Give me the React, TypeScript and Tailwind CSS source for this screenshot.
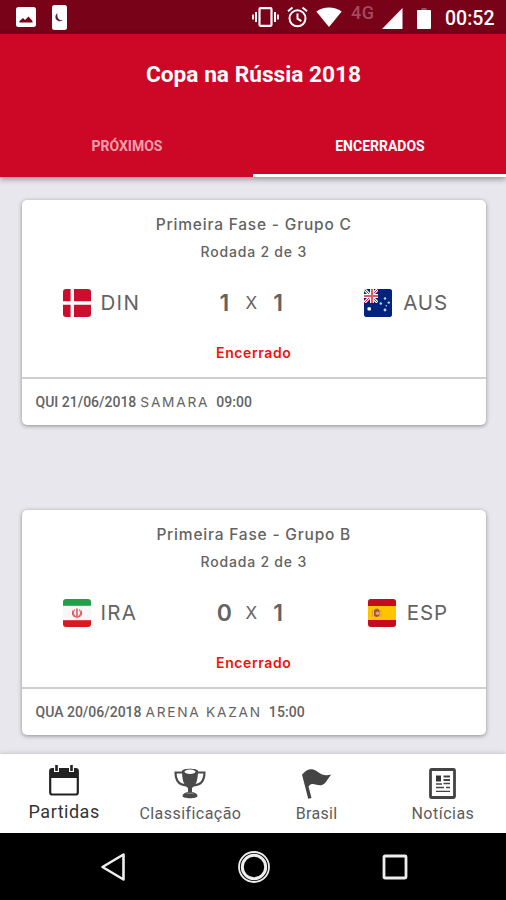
import React from "react";

interface Match {
  group: string;
  round: string;
  home: string;
  away: string;
  homeScore: number;
  awayScore: number;
  date: string;
  place: string;
  time: string;
  homeFlag: React.ReactNode;
  awayFlag: React.ReactNode;
}

const DenmarkFlag = () => (
  <svg className="w-7 h-7 rounded-[3px]" viewBox="0 0 28 28">
    <rect width="28" height="28" fill="#c8102e" />
    <path d="M9.3 0v28M0 14h28" stroke="#fff" strokeWidth="3.4" />
  </svg>
);

const AustraliaFlag = () => (
  <svg className="w-7 h-7 rounded-[3px]" viewBox="0 0 28 28">
    <rect width="28" height="28" fill="#00247d" />
    <path d="M0 0l14 14M14 0L0 14" stroke="#fff" strokeWidth="3" />
    <path d="M0 0l14 14M14 0L0 14" stroke="#d8223a" strokeWidth="1" />
    <path d="M0 7h14M8 0v14" stroke="#fff" strokeWidth="4" />
    <path d="M0 7h14M8 0v14" stroke="#e0596a" strokeWidth="2.2" />
    <path d="M14 0v14H0v14h28V0z" fill="#00247d" />
    <rect x="3.5" y="18.2" width="3.4" height="3.4" rx=".8" fill="#fff" />
    <g fill="#c9d2ee">
      <circle cx="21" cy="9.5" r="1.2" />
      <circle cx="16.8" cy="14.5" r="1.2" />
      <circle cx="24.8" cy="13.6" r="1.2" />
      <circle cx="22.3" cy="16.8" r=".8" />
      <circle cx="21" cy="21" r="1.4" />
    </g>
  </svg>
);

const IranFlag = () => (
  <svg className="w-7 h-7 rounded-[3px]" viewBox="0 0 28 28">
    <rect width="28" height="28" fill="#f7f7f7" />
    <rect width="28" height="6.8" fill="#239f4a" />
    <rect y="21.2" width="28" height="6.8" fill="#d71a20" />
    <g fill="none" stroke="#e0545c" strokeWidth="1.1">
      <path d="M14 9.5v9.8" strokeWidth="1.6" />
      <path d="M11.7 10.5c-2 2.5-1.6 5.8 1.3 7.5M16.3 10.5c2 2.5 1.6 5.8-1.3 7.5" />
      <path d="M10 11.5c-1.5 2.5-.5 5.5 2.2 6.5M18 11.5c1.5 2.5.5 5.5-2.2 6.5" />
    </g>
  </svg>
);

const SpainFlag = () => (
  <svg className="w-7 h-7 rounded-[3px]" viewBox="0 0 28 28">
    <rect width="28" height="28" fill="#ffc400" />
    <rect width="28" height="7" fill="#c60b1e" />
    <rect y="21" width="28" height="7" fill="#c60b1e" />
    <path d="M4.5 11v7M13 11v7" stroke="#e0a030" strokeWidth="1" />
    <path d="M6 11.5c1-2.3 4.5-2.3 5.5 0v4.5c0 2.6-5.5 2.6-5.5 0z" fill="#a8542c" />
    <circle cx="9.5" cy="14.3" r="1.7" fill="#d9a6a0" />
  </svg>
);

const matches: Match[] = [
  {
    group: "Primeira Fase - Grupo C",
    round: "Rodada 2 de 3",
    home: "DIN",
    away: "AUS",
    homeScore: 1,
    awayScore: 1,
    date: "QUI 21/06/2018",
    place: "SAMARA",
    time: "09:00",
    homeFlag: <DenmarkFlag />,
    awayFlag: <AustraliaFlag />,
  },
  {
    group: "Primeira Fase - Grupo B",
    round: "Rodada 2 de 3",
    home: "IRA",
    away: "ESP",
    homeScore: 0,
    awayScore: 1,
    date: "QUA 20/06/2018",
    place: "ARENA KAZAN",
    time: "15:00",
    homeFlag: <IranFlag />,
    awayFlag: <SpainFlag />,
  },
];

const StatusBar = () => (
  <div className="h-[34px] bg-[#780218] flex items-center pl-4 pr-[11px] text-white">
    <svg className="w-5 h-5" viewBox="0 0 20 20">
      <rect width="20" height="20" rx="2.5" fill="#fff" />
      <path d="M3.5 15.5V14l3.5-3 2 2 3.5-3.5 4 4.5v1.5z" fill="#780218" />
    </svg>
    <svg className="w-[15px] h-[25px] ml-4" viewBox="0 0 15 25">
      <rect width="15" height="25" rx="2.5" fill="#fff" />
      <path d="M5.5 8.2c-3 1.8-2.7 5.8.3 7.6 1.8 1 3.7.6 4.9-.6-3.5.4-6.2-2.5-5.2-7z" fill="#5a2030" />
    </svg>
    <div className="flex-1" />
    {/* Vibrate */}
    <svg className="w-[27px] h-5" viewBox="0 0 27 20" fill="none" stroke="#fff">
      <rect x="7.5" y="1.2" width="12" height="17.6" rx="1" strokeWidth="2.2" />
      <path d="M4 5v10M23 5v10" strokeWidth="2" />
      <path d="M1 7.5v5M26 7.5v5" strokeWidth="1.8" />
    </svg>
    {/* Alarm */}
    <svg className="w-[21px] h-[22px] ml-2" viewBox="0 0 21 22" fill="none" stroke="#fff" strokeWidth="2">
      <circle cx="10.5" cy="12.3" r="8" />
      <path d="M1 5.3l4.5-3.8M20 5.3l-4.5-3.8M10.5 7.5v5.2l3.8 2.5" />
    </svg>
    <svg className="w-[26px] h-5 ml-2" viewBox="0 0 26 20">
      <path d="M.3 4.6C7.5-1 18.5-1 25.7 4.6L13 20z" fill="#fff" />
    </svg>
    <span className="ml-[9px] w-6 mb-[8px] text-[18px] leading-[18px] font-medium tracking-[0.5px] text-[#a5495b]">4G</span>
    <svg className="w-[21px] h-[21px] ml-[7px] mt-[3px]" viewBox="0 0 21 21">
      <path d="M20.5 0v21H0z" fill="#fff" />
    </svg>
    <svg className="w-[14px] h-[21px] ml-[14px] mt-[2px]" viewBox="0 0 14 21">
      <path d="M4.5 0h5v3h-5z" fill="#a5495b" />
      <rect y="2" width="14" height="19" rx="1" fill="#fff" />
    </svg>
    <span className="ml-[14px] w-[50px] mt-[3px] text-[19.5px] leading-5 font-medium">00:52</span>
  </div>
);

const Header = () => (
  <header className="relative z-10 h-[143px] bg-[#cd0827] text-white shadow-[0_2px_6px_rgba(0,0,0,0.4)] flex flex-col">
    <h1 className="h-20 pt-[3px] pl-px flex items-center justify-center text-[22.7px] font-bold">
      Copa na Rússia 2018
    </h1>
    <div className="flex-1 grid grid-cols-2 text-[14px] font-bold">
      <button className="pt-[22px] pl-px flex justify-center text-[#f0a0ac]">PRÓXIMOS</button>
      <button className="pt-[22px] pl-px flex justify-center border-b-[3px] border-white">ENCERRADOS</button>
    </div>
  </header>
);

const MatchCard = ({ match }: { match: Match }) => (
  <article className="h-[225px] bg-white rounded-[5px] shadow-[0_1px_4px_rgba(0,0,0,0.4)] flex flex-col font-['Inter',sans-serif] text-[#636363]">
    <div className="h-[177px] pt-[15px] flex flex-col text-center">
      <p className="text-[15.5px] leading-5 tracking-[0.8px] font-medium">{match.group}</p>
      <p className="mt-[7px] text-[14px] leading-5 tracking-[0.8px] font-medium">{match.round}</p>
      <div className="mt-[27px] h-7 pl-[41px] pr-[38px] flex items-center justify-between leading-7">
        <div className="w-[150px] flex items-center text-[20.5px] tracking-[1.3px]">
          {match.homeFlag}
          <span className="ml-2.5">{match.home}</span>
        </div>
        <div className="w-[69px] flex items-center justify-between">
          <span className="w-[15px] text-[23px] font-semibold">{match.homeScore}</span>
          <span className="text-[17px]">X</span>
          <span className="w-[15px] text-[23px] font-semibold">{match.awayScore}</span>
        </div>
        <div className="w-[158px] flex items-center justify-end text-[20.5px] tracking-[0.9px]">
          {match.awayFlag}
          <span className="ml-[11px]">{match.away}</span>
        </div>
      </div>
      <p className="mt-[26px] text-[14px] leading-5 tracking-[0.6px] font-semibold text-[#f5100c]">Encerrado</p>
    </div>
    <div className="flex-1 border-t-2 border-[#cfcfd2] pl-[14px] flex items-center text-[14px] whitespace-pre">
      <span className="font-['Roboto',sans-serif] font-medium">{match.date}</span>
      <span className="ml-1 text-[13.7px] tracking-[1.75px]">{match.place}</span>
      <span className="ml-[7px] font-['Roboto',sans-serif] font-medium tracking-[0.1px]">{match.time}</span>
    </div>
  </article>
);

const CalendarIcon = () => (
  <svg className="w-[30px] h-[31px]" viewBox="0 0 30 31">
    <rect x="1.2" y="4.2" width="27.6" height="25.3" rx="2" fill="#fff" stroke="#222" strokeWidth="2.2" />
    <path d="M1 5h28v8H1z" fill="#222" />
    <path d="M7.5 0v7M22.5 0v7" stroke="#fff" strokeWidth="5" />
    <path d="M7.5 0v6M22.5 0v6" stroke="#222" strokeWidth="2.6" />
  </svg>
);

const TrophyIcon = () => (
  <svg className="w-8 h-8" viewBox="0 0 32 32">
    <path d="M8.5 5.5H1.5C1.5 13 5 18 12 18.5M23.5 5.5h7C30.5 13 27 18 20 18.5" fill="none" stroke="#4a4a4a" strokeWidth="2" />
    <path d="M8 4c0-3 16-3 16 0 0 8-1.5 14-6 17v4c3 .5 5.5 2 5.5 4 0 3-15 3-15 0 0-2 2.5-3.5 5.5-4v-4C9.5 18 8 12 8 4z" fill="#4a4a4a" />
    <ellipse cx="16" cy="4.8" rx="5.5" ry="2.2" fill="#fff" />
    <path d="M12.5 26.2h7" stroke="#aaa" strokeWidth=".8" />
  </svg>
);

const FlagIcon = () => (
  <svg className="w-[30px] h-[30px]" viewBox="0 0 30 30">
    <path d="M0 5.5l1.5-1.3C5 0 10-1 14.5 2c5 4 9 5 15 3.5-3.5 3-5 9-9.5 10.5-5 1.5-9.5-4-13.5 1.5L9.5 29l-3.300.700z" fill="#444" />
  </svg>
);

const NewsIcon = () => (
  <svg className="w-[27px] h-[31px]" viewBox="0 0 27 31" fill="none" stroke="#444">
    <rect x="1.5" y="1.5" width="24" height="28" rx="1" strokeWidth="2.8" />
    <path d="M7 7.5h5v6H7z" fill="#333" stroke="none" />
    <path d="M14.5 8.5h6.5M14.5 12h6.5" strokeWidth="1.8" />
    <path d="M7 16h6M14.5 15.5h6.5M7 19.5h8M17 19.5h4M7 23.3h14" strokeWidth="1.3" />
  </svg>
);

const BottomNav = () => (
  <nav className="relative z-10 h-[79px] pl-px bg-white shadow-[0_-1px_4px_rgba(0,0,0,0.15)] grid grid-cols-4 text-[16px] text-[#5c5c5c]">
    <div className="flex flex-col items-center pt-[11px] text-[#333]">
      <CalendarIcon />
      <span className="mt-1 text-[18px] leading-6 tracking-[0.5px]">Partidas</span>
    </div>
    <div className="flex flex-col items-center pt-[13px]">
      <TrophyIcon />
      <span className="mt-[3px] leading-6 tracking-[0.45px]">Classificação</span>
    </div>
    <div className="flex flex-col items-center pt-[15px]">
      <FlagIcon />
      <span className="mt-[3px] leading-6 tracking-[0.3px]">Brasil</span>
    </div>
    <div className="flex flex-col items-center pt-[14px]">
      <NewsIcon />
      <span className="mt-[3px] leading-6 tracking-[0.5px]">Notícias</span>
    </div>
  </nav>
);

const AndroidBar = () => (
  <div className="h-[67px] pl-px bg-black flex items-center justify-center">
    <svg className="w-[26px] h-[30px]" viewBox="0 0 26 30" fill="none" stroke="#eee" strokeWidth="2.6" strokeLinejoin="round">
      <path d="M23.5 2.5v25L2.5 15z" />
    </svg>
    <svg className="w-[34px] h-[34px] mx-[111px]" viewBox="0 0 34 34" fill="none" stroke="#eee">
      <circle cx="17" cy="17" r="15" strokeWidth="1.8" />
      <circle cx="17" cy="17" r="11.7" strokeWidth="3" />
    </svg>
    <svg className="w-[26px] h-[26px]" viewBox="0 0 26 26" fill="none" stroke="#eee" strokeWidth="2.8">
      <rect x="2" y="2" width="22" height="22" rx="1" />
    </svg>
  </div>
);

export default function App() {
  return (
    <div className="w-[506px] h-[900px] overflow-hidden flex flex-col bg-[#e8e7ed] font-['Roboto',sans-serif]">
      <StatusBar />
      <Header />
      <main className="flex-1 min-h-0 pt-[23px] pl-[21.5px] pr-5 flex flex-col gap-[85px]">
        {matches.map((match) => (
          <MatchCard key={match.group} match={match} />
        ))}
      </main>
      <BottomNav />
      <AndroidBar />
    </div>
  );
}
